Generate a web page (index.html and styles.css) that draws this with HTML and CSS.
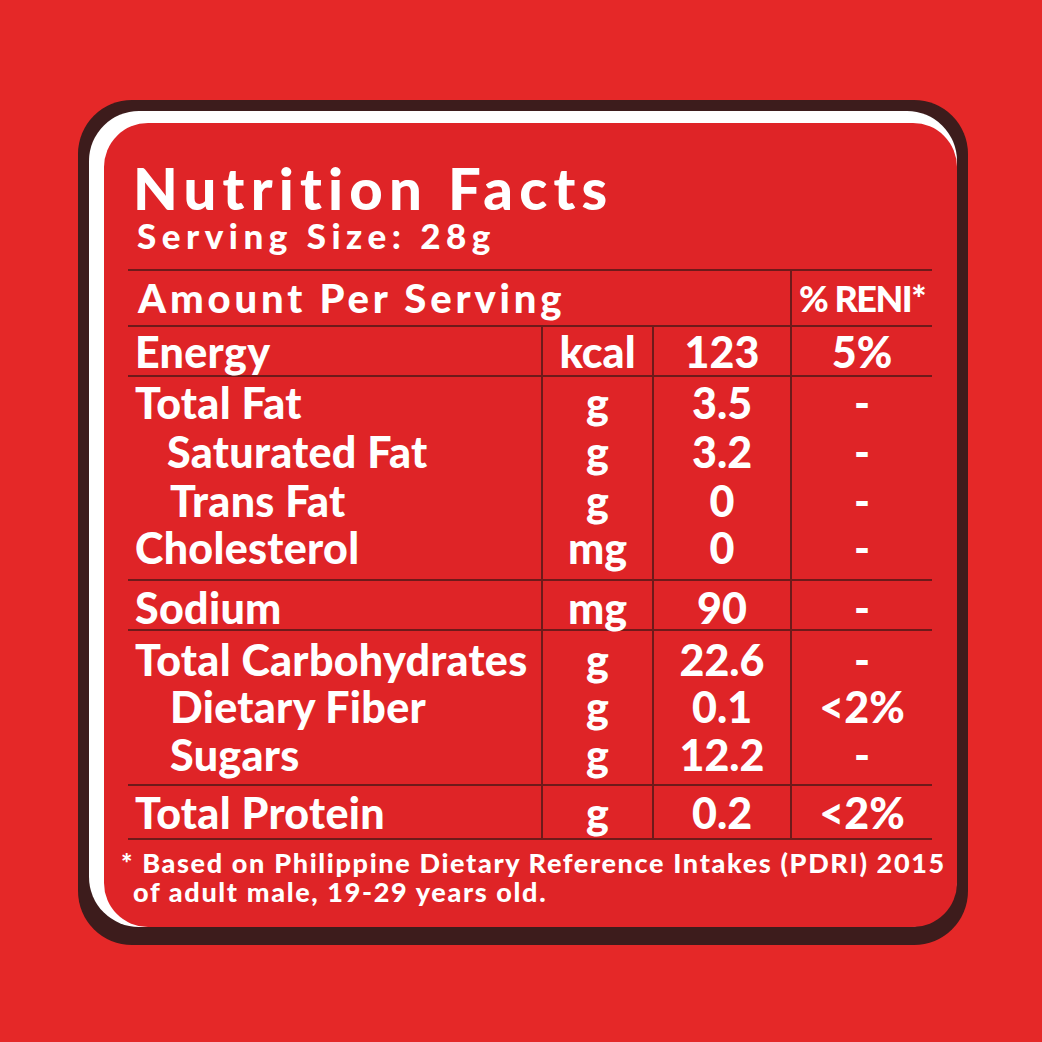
FILE: index.html
```html
<!DOCTYPE html>
<html lang="en">
<head>
<meta charset="utf-8">
<title>Nutrition Facts</title>
<link rel="stylesheet" href="styles.css">
</head>
<body>
<div class="page">
  <div class="card">
    <div class="frame">
      <div class="panel">
        <h1 class="title">Nutrition Facts</h1>
        <p class="serving">Serving Size: 28g</p>
        <table class="facts">
          <colgroup><col class="w1"><col class="w2"><col class="w3"><col class="w4"></colgroup>
          <thead>
            <tr class="head"><th colspan="3" class="amt">Amount Per Serving</th><th class="reni">% RENI*</th></tr>
          </thead>
          <tbody class="grp">
            <tr class="r-energy"><td class="lbl">Energy</td><td class="unit">kcal</td><td class="val">123</td><td class="pct">5%</td></tr>
          </tbody>
          <tbody class="grp">
            <tr class="r-fat"><td class="lbl">Total Fat</td><td class="unit">g</td><td class="val">3.5</td><td class="pct">-</td></tr>
            <tr class="r-mid"><td class="lbl sub">Saturated Fat</td><td class="unit">g</td><td class="val">3.2</td><td class="pct">-</td></tr>
            <tr class="r-mid"><td class="lbl sub2">Trans Fat</td><td class="unit">g</td><td class="val">0</td><td class="pct">-</td></tr>
            <tr class="r-chol"><td class="lbl">Cholesterol</td><td class="unit">mg</td><td class="val">0</td><td class="pct">-</td></tr>
          </tbody>
          <tbody class="grp">
            <tr class="r-sodium"><td class="lbl">Sodium</td><td class="unit">mg</td><td class="val">90</td><td class="pct">-</td></tr>
          </tbody>
          <tbody class="grp">
            <tr class="r-carb"><td class="lbl">Total Carbohydrates</td><td class="unit">g</td><td class="val">22.6</td><td class="pct">-</td></tr>
            <tr class="r-fiber"><td class="lbl sub2">Dietary Fiber</td><td class="unit">g</td><td class="val">0.1</td><td class="pct">&lt;2%</td></tr>
            <tr class="r-sugar"><td class="lbl sub2">Sugars</td><td class="unit">g</td><td class="val">12.2</td><td class="pct">-</td></tr>
          </tbody>
          <tbody class="grp">
            <tr class="r-protein"><td class="lbl">Total Protein</td><td class="unit">g</td><td class="val">0.2</td><td class="pct">&lt;2%</td></tr>
          </tbody>
        </table>
        <p class="note">* Based on Philippine Dietary Reference Intakes (PDRI) 2015<br><span class="note2">of adult male, 19-29 years old.</span></p>
      </div>
    </div>
  </div>
</div>
</body>
</html>
```

FILE: styles.css
```css
html, body {
  margin: 0;
  padding: 0;
}
body {
  background: #e52828;
  font-family: Lato, "Open Sans", sans-serif;
  font-weight: 900;
  color: #ffffff;
}
.page {
  width: 1042px;
  height: 1042px;
  overflow: hidden;
  box-sizing: border-box;
  padding: 100px 0 0 78px;
}
.card {
  width: 890px;
  height: 845px;
  box-sizing: border-box;
  background: #3d1c1c;
  border-radius: 54px;
  padding: 11px 11px 18px 11px;
}
.frame {
  height: 100%;
  box-sizing: border-box;
  background: #ffffff;
  border-radius: 50px;
  padding: 12px 0 0 15px;
}
.panel {
  height: 100%;
  box-sizing: border-box;
  background: #df2427;
  border-radius: 44px;
  padding: 36px 25px 0 24px;
}
.title {
  margin: 0;
  font-size: 58px;
  line-height: 58px;
  font-weight: 900;
  letter-spacing: 6.2px;
  padding-left: 5px;
}
.serving {
  margin: 0;
  font-size: 35px;
  line-height: 36px;
  letter-spacing: 5.5px;
  padding-left: 9px;
  padding-bottom: 16px;
}
.facts {
  width: 804px;
  table-layout: fixed;
  border-collapse: collapse;
  border-spacing: 0;
}
.w1 { width: 414px; }
.w2 { width: 111px; }
.w3 { width: 138px; }
.w4 { width: 141px; }
.facts th, .facts td {
  padding: 0;
  font-weight: 900;
  white-space: nowrap;
  line-height: 1;
}
.head {
  height: 56px;
  border-top: 2px solid #6e1a1a;
  border-bottom: 2px solid #6e1a1a;
}
.facts th.amt {
  text-align: left;
  font-size: 40px;
  letter-spacing: 3.85px;
  padding-left: 10px;
}
.facts th.reni {
  text-align: center;
  font-size: 36px;
  letter-spacing: -1.5px;
  border-left: 2px solid #6e1a1a;
}
.grp {
  border-bottom: 2px solid #6e1a1a;
}
.r-energy { height: 50px; }
.r-fat { height: 51px; }
.r-mid { height: 49px; }
.r-chol { height: 55px; }
.facts .r-chol td { padding-bottom: 9px; }
.r-sodium { height: 50px; }
.facts .r-sodium td { padding-top: 4px; }
.r-carb { height: 53px; }
.facts .r-carb td { padding-top: 5px; }
.r-fiber { height: 47px; }
.r-sugar { height: 55px; }
.facts .r-sugar td { padding-bottom: 5px; }
.r-protein { height: 54px; }
.lbl {
  font-size: 43px;
  text-align: left;
  letter-spacing: 0.3px;
}
.facts td.lbl { padding-left: 7px; }
.facts td.sub { padding-left: 39px; }
.facts td.sub2 { padding-left: 42px; }
.unit, .val, .pct {
  font-size: 43px;
  text-align: center;
  border-left: 2px solid #6e1a1a;
}
.note {
  margin: 8px -40px 0 -7px;
  font-size: 27px;
  line-height: 29px;
  letter-spacing: 1.65px;
  white-space: nowrap;
}
.note2 {
  padding-left: 12px;
}
```
